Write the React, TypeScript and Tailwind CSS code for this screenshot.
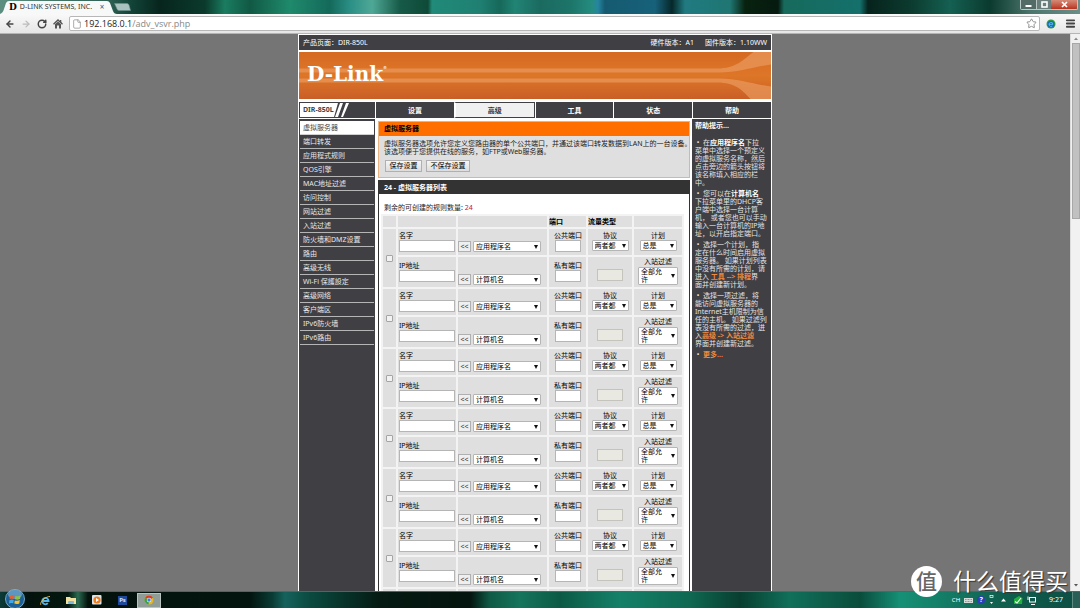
import React from "react";
import { ArrowLeft, ArrowRight, RotateCw, House, Star, Menu, File } from "lucide-react";

const tabs = ["设置", "高级", "工具", "状态", "帮助"];

const menu = [
    "虚拟服务器", "端口转发", "应用程式规则", "QOS引擎", "MAC地址过滤", "访问控制", "网站过滤", "入站过滤",
    "防火墙和DMZ设置", "路由", "高级无线", "Wi-Fi 保護設定", "高级网络", "客户端区", "IPv6防火墙", "IPv6路由",
];

const rules = [1, 2, 3, 4, 5, 6, 7];

function Wallpaper({ id, stops }: { id: string; stops: [number, string][] }) {
    return (
        <svg className="absolute inset-0 h-full w-full" viewBox="0 0 1080 16" preserveAspectRatio="none" aria-hidden="true">
            <defs>
                <linearGradient id={id} gradientUnits="userSpaceOnUse" x1="0" y1="0" x2="1080" y2="12">
                    {stops.map(([x, color]) => (
                        <stop key={x} offset={x / 1080} stopColor={color} />
                    ))}
                </linearGradient>
            </defs>
            <rect width="1080" height="16" fill={`url(#${id})`} />
        </svg>
    );
}

function TitleBar() {
    return (
        <div className="relative h-[14px] shrink-0">
            <Wallpaper
                id="top"
                stops={[
                    [0, "#5d8f80"], [110, "#2d5f52"], [130, "#134539"], [160, "#07251d"], [205, "#0b3a2c"], [225, "#1a7c60"],
                    [250, "#115944"], [290, "#1f8a6c"], [330, "#14695a"], [350, "#2b8f86"], [372, "#4fa896"], [400, "#175a48"], [428, "#0f4a38"],
                    [432, "#218a78"], [480, "#1f8072"], [500, "#16685a"], [515, "#218474"], [540, "#1b6a60"], [570, "#1d7468"],
                    [592, "#258c80"], [598, "#2585a0"], [605, "#155a70"], [655, "#17617a"], [672, "#06282a"], [685, "#207a80"],
                    [730, "#1f7672"], [745, "#08220f"], [778, "#061a10"], [784, "#176a5c"], [860, "#14706c"], [868, "#06231c"],
                    [910, "#0c3a2e"], [950, "#146052"], [990, "#0b3a2e"], [1030, "#4b756c"], [1080, "#6a8f88"],
                ]}
            />
            <div className="relative flex h-full items-end">
                <svg className="absolute left-0 top-0 h-[14px] w-[132px]" viewBox="0 0 132 14" aria-hidden="true">
                    <path d="M0 14 Q3 13 4 9 L6 3 Q7 1 9 1 H107 Q109 1 110 3 L113 11 Q114 14 117 14 Z" fill="#f7f8f8" />
                    <path d="M114.500 3.500 H127 Q128.500 3.500 129 5 L130.500 10.500 H119 Q117.500 10.500 117 9 Z" fill="#a9c2bf" stroke="#6c8f8b" strokeWidth="0.600" />
                </svg>
                <div className="relative flex h-[14px] items-center pl-[9px] text-[8px] leading-[14px] text-[#333]">
                    <span className="mr-[3px] font-['DejaVu_Serif'] text-[9px] font-bold text-black">D</span>
                    <span className="w-[80px] whitespace-nowrap font-['Noto_Sans',sans-serif] text-[7px]">D-LINK SYSTEMS, INC.</span>
                    <button type="button" aria-label="关闭标签页" className="text-[8px] text-[#555]">×</button>
                </div>
                <div className="ml-auto mr-[2px] flex h-[10px] self-start overflow-hidden rounded-b-[2px] border border-t-0 border-[#b9c8c4]">
                    <button type="button" aria-label="最小化" className="flex w-[16px] items-center justify-center border-r border-[#b9c8c4] bg-[#536b66]">
                        <svg className="h-[9px] w-[9px]" viewBox="0 0 9 9"><path d="M1.500 6 H7.500" stroke="#fff" strokeWidth="2" /></svg>
                    </button>
                    <button type="button" aria-label="还原" className="flex w-[14px] items-center justify-center bg-[#6a7f7b]">
                        <svg className="h-[9px] w-[9px]" viewBox="0 0 9 9"><rect x="2" y="2" width="5" height="5" fill="none" stroke="#fff" strokeWidth="1.600" /></svg>
                    </button>
                    <button type="button" aria-label="关闭" className="flex w-[26px] items-center justify-center bg-linear-to-b from-[#d58a77] to-[#b8301c]">
                        <svg className="h-[9px] w-[9px]" viewBox="0 0 9 9"><path d="M2 2 L7 7 M7 2 L2 7" stroke="#fff" strokeWidth="1.700" /></svg>
                    </button>
                </div>
            </div>
        </div>
    );
}

function Toolbar() {
    return (
        <div className="flex h-[20px] shrink-0 items-center border-b border-[#b5b5b5] bg-linear-to-b from-[#f9f9f9] to-[#e6e6e6] pl-[5px] pr-[4px] text-[#444]">
            <button type="button" aria-label="后退" className="mr-[6px]"><ArrowLeft size={10} strokeWidth={3.5} /></button>
            <button type="button" aria-label="前进" className="mr-[6px] text-[#bbb]"><ArrowRight size={10} strokeWidth={3} /></button>
            <button type="button" aria-label="重新加载" className="mr-[6px]"><RotateCw size={10} strokeWidth={3.5} /></button>
            <button type="button" aria-label="主页" className="mr-[6px]">
                <svg className="h-[10px] w-[10px]" viewBox="0 0 10 10">
                    <path d="M0.500 5.300 L5 1 L9.500 5.300" fill="none" stroke="#555" strokeWidth="1.400" />
                    <path d="M7 1 H8.300 V4 L7 3 Z" fill="#555" />
                    <path d="M2 5.300 L5 2.600 L8 5.300 V9.500 H6 V6.500 H4 V9.500 H2 Z" fill="#555" />
                </svg>
            </button>
            <div className="flex h-[15px] flex-1 items-center rounded-[2px] border border-[#b7b7b7] bg-white pl-[2px] pr-[2px]">
                <File size={10} strokeWidth={2} className="mr-[2px] text-[#999]" />
                <div className="flex-1 whitespace-nowrap font-['Open_Sans',sans-serif] text-[9px] leading-[13px] text-[#222]">
                    192.168.0.1<span className="text-[#888]">/adv_vsvr.php</span>
                </div>
                <Star size={11} strokeWidth={2} className="text-[#888]" />
            </div>
            <svg className="ml-[6px] h-[10px] w-[10px]" viewBox="0 0 10 10" aria-hidden="true">
                <circle cx="5" cy="5" r="4.500" fill="#2f9a45" />
                <circle cx="5" cy="5.300" r="3.300" fill="#1565c0" />
                <path d="M3 5.300 H7 A2 2 0 1 0 6.300 7" fill="none" stroke="#5cc4e8" strokeWidth="0.900" />
            </svg>
            <button type="button" aria-label="菜单" className="ml-[9px]"><Menu size={11} strokeWidth={4} /></button>
        </div>
    );
}

function Banner() {
    return (
        <div className="relative my-[2px] h-[47px] bg-linear-to-b from-[#d56a22] via-[#de7628] to-[#c95f26]">
            <svg className="absolute inset-0 h-full w-full" viewBox="0 0 472 48" preserveAspectRatio="xMaxYMid slice" aria-hidden="true">
                <path d="M0 17 H418 C438 17 444 8 455 0 H472 V13 C455 15 440 21 420 21 H0 Z" fill="#e99a5e" opacity="0.700" />
                <path d="M0 27 H420 C440 27 455 33 472 35 V48 H452 C444 40 438 31 418 31 H0 Z" fill="#e99a5e" opacity="0.700" />
            </svg>
            <div className="relative flex pl-[8px] pt-[10px] font-['DejaVu_Serif',serif] text-[20px] font-bold leading-[24px] text-white">
                D-Link
                <span className="text-[4px] leading-[12px]">®</span>
            </div>
        </div>
    );
}

function Nav() {
    return (
        <div className="flex h-[18px] border-y border-white bg-[#403f44]">
            <div className="relative w-[76px] text-[7px] font-bold leading-[16px] text-[#444]">
                <svg className="absolute inset-0 h-full w-full" viewBox="0 0 76 16" preserveAspectRatio="xMinYMid slice" aria-hidden="true">
                    <path d="M1 1 H39 L35 15 H1 Z" fill="#fff" />
                    <path d="M41 1 H44 L39 15 H36 Z M47 1 H50 L44 15 H42 Z" fill="#fff" />
                </svg>
                <span className="relative pl-[4px] font-['Noto_Sans',sans-serif]">DIR-850L</span>
            </div>
            {tabs.map((t) => (
                <a
                    key={t}
                    href="#"
                    className={
                        t === "高级"
                            ? "flex-1 border border-l-2 border-[#403f44] border-l-white bg-[#f0f0f0] text-center text-[7px] font-bold leading-[15px] text-[#333]"
                            : "flex-1 border-l border-white text-center text-[7px] font-bold leading-[17px] text-white"
                    }
                >
                    {t}
                </a>
            ))}
        </div>
    );
}

function SideMenu() {
    return (
        <div className="w-[76px] shrink-0 bg-[#403f44] px-[1px] pt-[2px] text-[7px] leading-[13px] text-[#e8e8e8]">
            {menu.map((m, i) => (
                <a
                    key={m}
                    href="#"
                    className={
                        i === 0
                            ? "block h-[14px] border-b border-[#d0d0d0] bg-white pl-[3px] text-[#444]"
                            : "block h-[14px] whitespace-nowrap border-b border-[#b5b5b5] pl-[3px]"
                    }
                >
                    {m}
                </a>
            ))}
        </div>
    );
}

function Picker({ label, value, size }: { label: string; value: string; size: "wide" | "narrow" | "tall" }) {
    const sizes = {
        wide: "h-[11px] w-[68px] whitespace-nowrap",
        narrow: "h-[11px] w-[37px] whitespace-nowrap",
        tall: "h-[18px] w-[40px] whitespace-normal pr-[12px]",
    };
    return (
        <span className="relative inline-block align-top">
            <select
                aria-label={label}
                className={`block appearance-none rounded-[1px] border border-[#b5b5b5] bg-white pl-[2px] text-[7px] leading-[8px] text-black ${sizes[size]}`}
            >
                <option>{value}</option>
            </select>
            <svg className="pointer-events-none absolute inset-y-0 right-[3px] my-auto h-[4px] w-[4px]" viewBox="0 0 4 4" aria-hidden="true">
                <path d="M0 0 H4 L2 4 Z" fill="#111" />
            </svg>
        </span>
    );
}

function Field({ label, width }: { label: string; width: string }) {
    return (
        <label className="block leading-[9px]">
            <span className="block whitespace-nowrap">{label}</span>
            <input type="text" className={`block h-[12px] border border-[#b5b5b5] bg-white ${width}`} />
        </label>
    );
}

function RuleRows() {
    return (
        <>
            <tr className="h-[26px] bg-[#dfdfdf]">
                <td rowSpan={2} className="text-center">
                    <input type="checkbox" aria-label="启用" className="mx-auto block h-[7px] w-[7px] appearance-none rounded-[1px] border border-[#a5a5a5] bg-[#f2f2f2]" />
                </td>
                <td className="pl-[1px] pt-[2px] align-top"><Field label="名字" width="w-[56px]" /></td>
                <td className="pb-[3px] align-bottom">
                    <div className="flex gap-[2px]">
                        <button type="button" className="h-[11px] w-[13px] border border-[#b0b0b0] bg-[#efefef] text-[7px] leading-[9px] text-[#444]">&lt;&lt;</button>
                        <Picker label="应用程序名" value="应用程序名" size="wide" />
                    </div>
                </td>
                <td className="pl-[5px] pt-[2px] align-top"><Field label="公共端口" width="w-[26px] ml-px" /></td>
                <td className="pt-[2px] text-center align-top">
                    <span className="block leading-[9px]">协议</span>
                    <Picker label="协议" value="两者都" size="narrow" />
                </td>
                <td className="pt-[2px] text-center align-top">
                    <span className="block leading-[9px]">计划</span>
                    <Picker label="计划" value="总是" size="narrow" />
                </td>
            </tr>
            <tr className="h-[30px] bg-[#dfdfdf]">
                <td className="pl-[1px] pt-[4px] align-top"><Field label="IP地址" width="w-[56px]" /></td>
                <td className="pb-[2px] align-bottom">
                    <div className="flex gap-[2px]">
                        <button type="button" className="h-[11px] w-[13px] border border-[#b0b0b0] bg-[#efefef] text-[7px] leading-[9px] text-[#444]">&lt;&lt;</button>
                        <Picker label="计算机名" value="计算机名" size="wide" />
                    </div>
                </td>
                <td className="pl-[5px] pt-[4px] align-top"><Field label="私有端口" width="w-[26px] ml-px" /></td>
                <td className="pt-[6px]">
                    <input type="text" disabled aria-label="协议编号" className="mx-auto block h-[12px] w-[26px] border border-[#c4c4bc] bg-[#e9e8e1]" />
                </td>
                <td className="text-center align-top">
                    <span className="block leading-[10px]">入站过滤</span>
                    <Picker label="入站过滤" value="全部允许" size="tall" />
                </td>
            </tr>
        </>
    );
}

function Main() {
    return (
        <div className="min-w-0 flex-1 bg-white pl-[3px] pr-[2px] pt-[2px] text-[7px] text-[#222]">
            <div className="mb-[2px] border border-[#e6b483] bg-[#dfdfdf]">
                <h2 className="bg-[#ff6f00] pl-[5px] text-[7px] font-bold leading-[14px] text-black">虚拟服务器</h2>
                <div className="h-[41px] pl-[5px] pt-[4px]">
                    <p className="whitespace-nowrap leading-[8px]">
                        虚拟服务器选项允许您定义您路由器的单个公共端口，并通过该端口转发数据到LAN上的一台设备。
                        <br />
                        该选项便于您提供在线的服务，如FTP或Web服务器。
                    </p>
                    <div className="mt-[4px] flex gap-[4px] pl-px">
                        <button type="button" className="h-[12px] w-[37px] border border-[#b0b0b0] bg-linear-to-b from-[#f6f6f6] to-[#dcdcdc] leading-[10px] text-black">保存设置</button>
                        <button type="button" className="h-[12px] w-[44px] border border-[#b0b0b0] bg-linear-to-b from-[#f6f6f6] to-[#dcdcdc] leading-[10px] text-black">不保存设置</button>
                    </div>
                </div>
            </div>
            <div className="border border-[#333]">
                <h2 className="bg-[#333] pl-[5px] text-[7px] font-bold leading-[13px] text-white">24 - 虚拟服务器列表</h2>
                <p className="pl-[5px] pt-[7px] leading-[13px]">剩余的可创建的规则数量: <span className="text-[#c01818]">24</span></p>
                <table className="ml-[2px] table-fixed border-separate border-spacing-[2px] bg-[#f3f3f3] leading-[9px] text-black">
                    <colgroup>
                        <col className="w-[13px]" />
                        <col className="w-[58px]" />
                        <col className="w-[89px]" />
                        <col className="w-[37px]" />
                        <col className="w-[44px]" />
                        <col className="w-[48px]" />
                    </colgroup>
                    <thead>
                        <tr className="h-[11px] bg-[#dfdfdf] text-left">
                            <td /><td /><td />
                            <th>端口</th>
                            <th>流量类型</th>
                            <td />
                        </tr>
                    </thead>
                    <tbody>
                        {rules.map((r) => <RuleRows key={r} />)}
                    </tbody>
                </table>
            </div>
        </div>
    );
}

function Help() {
    return (
        <div className="w-[79px] shrink-0 bg-[#403f44] pl-[3px] pt-[2px] text-[7px] leading-[8px] text-[#e4e4e4]">
            <h3 className="mb-[9px] font-bold leading-[9px] text-white">帮助提示...</h3>
            <div className="flex flex-col gap-[3px] whitespace-nowrap">
                <p>&nbsp;•&nbsp; 在<b className="text-white">应用程序名</b>下拉<br />菜单中选择一个预定义<br />的虚拟服务名称，然后<br />点击旁边的箭头按钮将<br />该名称填入相应的栏<br />中。</p>
                <p>&nbsp;•&nbsp; 您可以在<b className="text-white">计算机名</b><br />下拉菜单里的DHCP客<br />户端中选择一台计算<br />机， 或者您也可以手动<br />输入一台计算机的IP地<br />址，以开启指定端口。</p>
                <p>&nbsp;•&nbsp; 选择一个计划，指<br />定在什么时间启用虚拟<br />服务器。 如果计划列表<br />中没有所需的计划，请<br />进入 <a href="#" className="font-bold text-[#f08a3c]">工具 --&gt; 排程</a>界<br />面并创建新计划。</p>
                <p>&nbsp;•&nbsp; 选择一项过滤，将<br />能访问虚拟服务器的<br />Internet主机限制为信<br />任的主机。 如果过滤列<br />表没有所需的过滤，进<br />入<a href="#" className="font-bold text-[#f08a3c]">高级 -&gt; 入站过滤</a><br />界面并创建新过滤。</p>
                <p>&nbsp;•&nbsp; <a href="#" className="font-bold text-[#f08a3c]">更多...</a></p>
            </div>
        </div>
    );
}

function ScrollBar() {
    return (
        <div className="flex w-[10px] shrink-0 flex-col items-center border-l border-[#dcdcdc] bg-[#f1f1f1]">
            <svg className="h-[9px] w-[8px] shrink-0" viewBox="0 0 8 9" aria-hidden="true"><path d="M4 3.500 L6 6 H2 Z" fill="#888" /></svg>
            <div className="h-[176px] w-[8px] border border-[#a8a8a8] bg-[#c1c1c1]" />
            <svg className="mt-auto h-[11px] w-[8px] shrink-0" viewBox="0 0 8 11" aria-hidden="true"><path d="M2 4 H6 L4 6.500 Z" fill="#555" /></svg>
        </div>
    );
}

function TaskBar() {
    return (
        <div className="relative h-[17px] shrink-0 border-t border-[#4d6a60]">
            <Wallpaper
                id="bottom"
                stops={[
                    [0, "#0c3a36"], [28, "#03120c"], [68, "#04180f"], [78, "#2a6a50"], [88, "#04120c"], [250, "#03140f"], [272, "#093a34"],
                    [285, "#15625c"], [310, "#0b4a40"], [380, "#041a12"], [470, "#04140e"], [490, "#0f5a46"], [520, "#16745c"],
                    [560, "#0c5a46"], [620, "#148068"], [690, "#0f6852"], [740, "#083e30"], [790, "#10705a"], [860, "#0a4c3c"],
                    [900, "#159076"], [950, "#137a64"], [1000, "#10604e"], [1080, "#0d4e44"],
                ]}
            />
            <div className="relative flex h-full items-center pl-[5px] text-white">
                <button type="button" aria-label="开始" className="-mt-[3px] mr-[15px] w-[20px] shrink-0">
                    <svg className="h-[20px] w-[20px]" viewBox="0 0 20 20">
                        <circle cx="10" cy="10" r="9.500" fill="#1b5f94" stroke="#8fc0dc" strokeWidth="0.800" />
                        <ellipse cx="10" cy="5.500" rx="7" ry="4.500" fill="#9fd0ea" opacity="0.500" />
                        <path d="M5 7 Q7.500 5.500 9.500 6.600 L9 10 Q6.800 9 4.500 10.200 Z" fill="#e8602c" />
                        <path d="M10.500 7 Q13 8 15.500 6.600 L15 10 Q12.500 11.200 10 10.300 Z" fill="#8cc63f" />
                        <path d="M4.400 11.200 Q6.800 10 8.800 11 L8.300 14.300 Q6 13.400 4 14.500 Z" fill="#3fa9e8" />
                        <path d="M9.800 11.400 Q12.500 12.300 14.800 11 L14.300 14.500 Q11.800 15.600 9.300 14.600 Z" fill="#fbc02d" />
                    </svg>
                </button>
                <button type="button" aria-label="Internet Explorer" className="mr-[15px] shrink-0">
                    <svg className="h-[11px] w-[11px]" viewBox="0 0 11 11">
                        <path d="M2.200 6 H8.600 A3.200 3.200 0 1 0 7.800 8.200" fill="none" stroke="#54b4ee" strokeWidth="1.800" />
                        <path d="M1 10 C-1 8 5 1.500 10 1.500" fill="none" stroke="#f2c14b" strokeWidth="0.900" />
                    </svg>
                </button>
                <button type="button" aria-label="资源管理器" className="mr-[16px] shrink-0">
                    <svg className="h-[10px] w-[10px]" viewBox="0 0 10 10">
                        <path d="M0 2 H4 L5 3 H10 V9 H0 Z" fill="#f2e2a0" />
                        <rect x="2" y="6" width="6" height="3" rx="1" fill="#7fb8d8" />
                    </svg>
                </button>
                <button type="button" aria-label="媒体播放器" className="mr-[16px] shrink-0">
                    <svg className="h-[10px] w-[10px]" viewBox="0 0 10 10">
                        <rect width="9.500" height="9.500" rx="1" fill="#d9e4ea" />
                        <circle cx="5" cy="5" r="3.600" fill="#f07c1c" />
                        <path d="M4 3 L7 5 L4 7 Z" fill="#fff" />
                    </svg>
                </button>
                <button type="button" aria-label="Photoshop" className="mr-[10px] h-[9px] w-[9px] shrink-0 bg-[#1e4a9c] text-center text-[6px] font-bold leading-[9px] text-[#cfe2ff]">Ps</button>
                <button type="button" aria-label="Chrome" className="flex h-[15px] w-[24px] shrink-0 items-center justify-center border border-[#b9c4c0] bg-[#8f9c97]">
                    <svg className="h-[10px] w-[10px]" viewBox="0 0 10 10">
                        <circle cx="5" cy="5" r="4.500" fill="#e8b923" />
                        <path d="M5 5 L1.100 2.700 A4.500 4.500 0 0 1 9 2.800 Z" fill="#dc3b2a" />
                        <path d="M5 5 L1.100 2.700 A4.500 4.500 0 0 0 4.600 9.500 Z" fill="#3aa350" />
                        <circle cx="5" cy="5" r="2.200" fill="#fff" />
                        <circle cx="5" cy="5" r="1.700" fill="#3d7de0" />
                    </svg>
                </button>
                <div className="ml-auto flex items-center gap-[4px] pr-[9px] text-[7px] leading-[12px]">
                    <span className="text-[6px]">CH</span>
                    <svg className="h-[8px] w-[9px]" viewBox="0 0 9 8" aria-hidden="true">
                        <rect y="2" width="9" height="5" fill="#d5dcda" />
                        <path d="M1 3.500 H8 M1 5.500 H8" stroke="#777" strokeWidth="0.700" strokeDasharray="1 0.500" />
                    </svg>
                    <span className="h-[8px] w-[8px] rounded-full bg-[#2b3fb8] text-center text-[7px] font-bold leading-[8px]">?</span>
                    <svg className="h-[10px] w-[5px]" viewBox="0 0 5 10" aria-hidden="true"><rect x="1" y="0.500" width="3" height="2" fill="none" stroke="#fff" strokeWidth="0.700" /><path d="M1 7 H4 L2.500 9 Z" fill="#fff" /></svg>
                    <svg className="mx-[3px] h-[4px] w-[5px]" viewBox="0 0 5 4" aria-hidden="true"><path d="M0 3.500 L2.500 0.500 L5 3.500 Z" fill="#fff" /></svg>
                    <svg className="h-[10px] w-[10px]" viewBox="0 0 10 10" aria-hidden="true"><path d="M1 4 L6 1 L9.500 3 L9 9 H1 Z" fill="#1faf3c" /><path d="M2 6.500 L4 8 L8 3" fill="none" stroke="#e5ffe8" strokeWidth="1.200" /></svg>
                    <svg className="h-[9px] w-[10px]" viewBox="0 0 10 9" aria-hidden="true"><rect x="2.500" y="1.500" width="6" height="4.500" fill="none" stroke="#fff" /><path d="M1 0.500 V4 M4 8.500 H8" stroke="#fff" /></svg>
                    <time className="ml-[8px] font-['Noto_Sans',sans-serif]">9:27</time>
                </div>
                <div className="h-full w-[8px] border-l border-[#5f8c82] bg-[#2a5f57]" />
            </div>
        </div>
    );
}

export default function App() {
    return (
        <div className="relative flex h-screen flex-col overflow-hidden bg-[#757575] font-['Noto_Sans','Noto_Sans_CJK_SC',sans-serif]">
            <TitleBar />
            <Toolbar />
            <div className="flex min-h-0 flex-1">
                <div className="min-w-0 flex-1 overflow-y-auto [scrollbar-width:none]">
                    <div className="mx-auto w-full max-w-[474px] border-x border-t border-white bg-white">
                        <div className="flex h-[15px] items-center bg-[#403f44] px-[4px] text-[7px] leading-[15px] text-white">
                            <span>产品页面：DIR-850L</span>
                            <span className="ml-auto">硬件版本：A1</span>
                            <span className="ml-[11px]">固件版本：1.10WW</span>
                        </div>
                        <Banner />
                        <Nav />
                        <div className="flex">
                            <SideMenu />
                            <Main />
                            <Help />
                        </div>
                    </div>
                </div>
                <ScrollBar />
            </div>
            <TaskBar />
            <div className="pointer-events-none absolute bottom-[10px] right-[12px] flex items-center gap-[11px] text-white">
                <span className="h-[31px] w-[31px] rounded-full bg-white text-center text-[21px] font-medium leading-[30px] text-[#666]">值</span>
                <span className="text-[23px] leading-[34px] [text-shadow:1px_1px_1px_#333]">什么值得买</span>
            </div>
        </div>
    );
}
